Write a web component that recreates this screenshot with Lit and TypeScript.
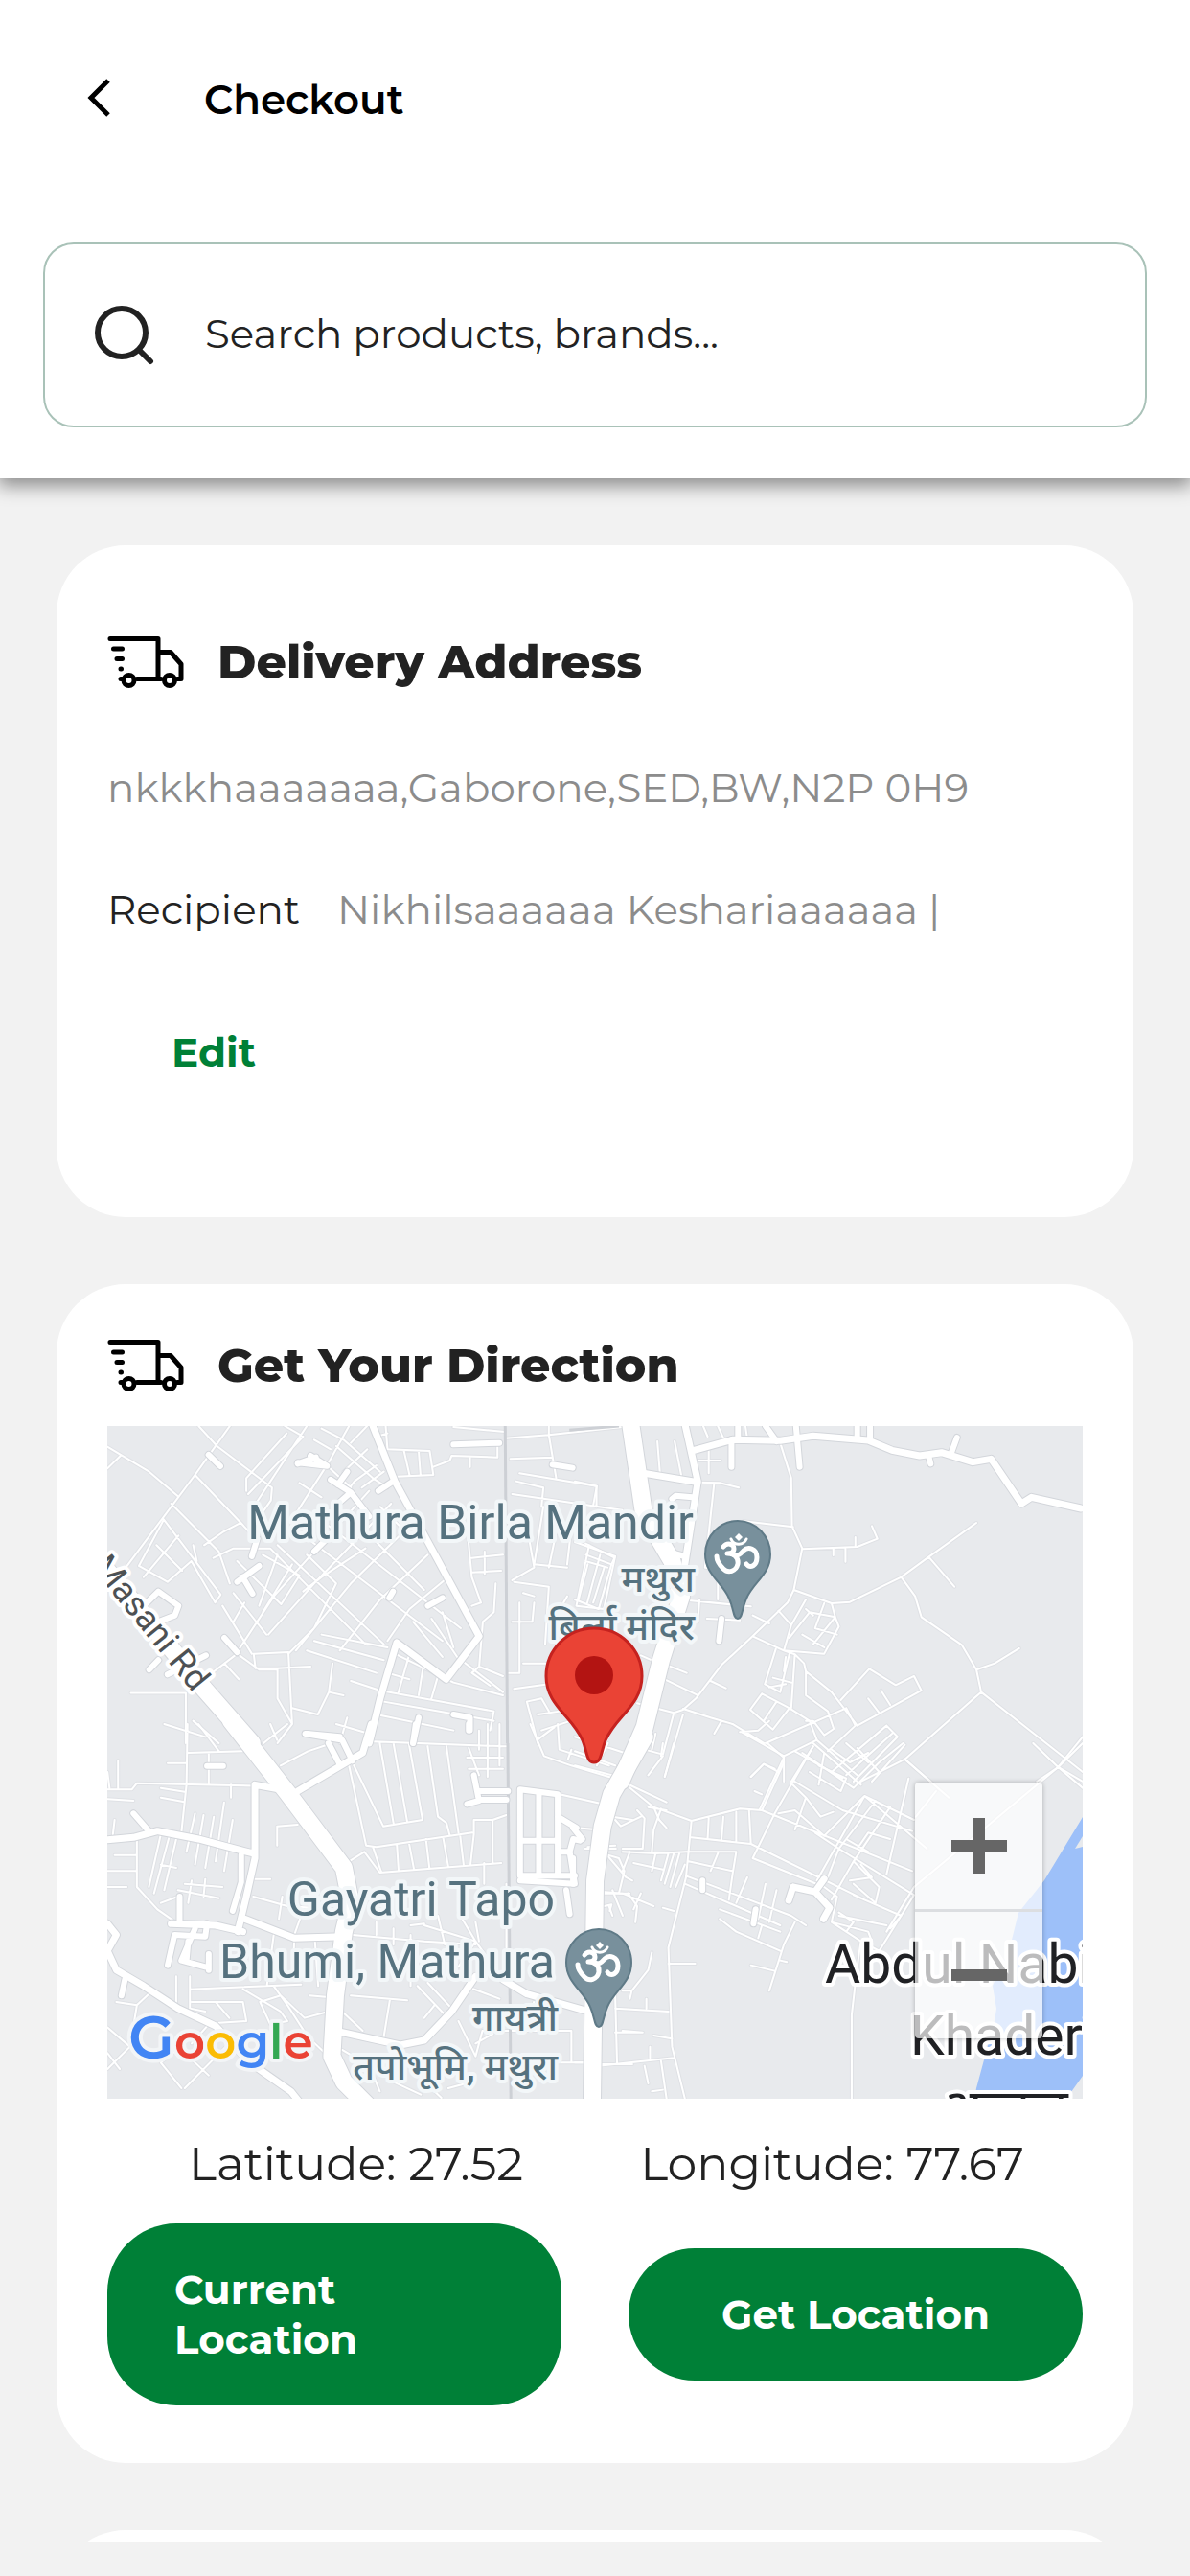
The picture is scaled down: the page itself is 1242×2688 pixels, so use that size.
import { LitElement, html, svg, css } from "lit";
import { customElement } from "lit/decorators.js";

/* Street geometry. Every tile has its own coordinate space, placed on the map by a matrix. */
interface Tile {
  matrix: string;
  minor: string;
  medium: string;
  artery: string;
  major: string;
  border: string;
}

const TILES: Tile[] = [
  {
    matrix: "matrix(.3827 0 0 .3333 -52 -149)",
    border: "M1221 447L1227 1440",
    major: "M136 900L400 1270L530 1440",
    artery: "M860 447L920 620L1020 830L1150 1105L1060 1240L925 1125L880 1300L850 1440",
    medium:
      "M412 537L444 573M1080 505L1205 500M1350 568L1405 578M656 562L735 572L690 540M655 565L705 545M745 615L800 655L850 730M790 590L765 630M765 690L800 655M875 650L915 620M545 800L530 855M490 935L550 885M505 920L532 972M700 840L735 800M905 985L915 965M1010 1010L1050 985M235 1010L275 965L330 1010L320 1040L275 1060M455 1110L490 1155M300 1225L405 1165M250 1210L275 1180M1080 1350L1125 1360V1400M985 1360L970 1440M680 1410L770 1420",
    minor:
      "M136 512L250 590L327 665M136 580L172 540M470 447L375 600L180 900M385 447L435 510L585 640L582 680L545 740M375 600L500 750L540 800M620 447L670 480L520 660M625 470L515 610V650M680 447L535 700M720 455L780 490L880 590M795 447L740 560L640 740M760 510L860 610L900 640M800 500L850 440M700 490L745 520M660 625L720 670M715 550L800 640M845 520L780 590M870 570L810 620L730 740M890 590L830 640M895 447L900 520L1015 525L1025 600L925 605M945 525L960 600M985 525L990 600M1025 575L1070 555L1075 540L1200 545V505M1125 545V575M870 480L900 470M1080 450L1220 465M1222 485L1340 475L1540 450M1340 447V475L1360 610M1235 550L1350 545M1260 595L1470 635V700M1250 620L1325 640L1320 700M1240 660L1540 710M310 690L440 840L470 940M290 740L445 975L430 1000L365 870L300 935L222 885L290 740M330 790L235 920M270 820L340 900M370 820L380 870M425 860L480 830L580 830L840 1130M400 820L450 780L500 750M560 850L660 915L610 1005L490 870M600 850L550 1010M640 880L560 1030M680 850L760 940L700 1080L630 1160M850 650L590 980L490 1155M910 690L700 940L575 1100M960 760L800 940L650 1150M1010 850L880 990L770 1150M1055 930L960 1020L900 1120M600 820L890 1130M660 780L1050 1120M740 760L1100 1080M800 730L1000 960M880 700L960 790M480 970L570 1100M510 1000L480 1060M450 1010L530 1160M670 965L720 920L840 830M720 1100L900 1140M700 1120L890 1180M680 1150L870 1220M630 1160L640 1380L600 1440M535 1160L630 1155M535 1160L540 1205L600 1205V1300L640 1380M600 1205L690 1200M410 1230L490 1160L550 1210H600M455 1190L495 1240M200 1283H350V1440M370 1370L440 1440M750 1190L740 1280L710 1350L640 1330M740 1280L780 1290M800 1245L880 1275L1190 1340L1180 1400M920 1160L1080 1250L1215 1290M900 1220L960 1240M1000 1180L985 1290M960 1160L930 1280M1040 1220L1020 1300M890 1310L1190 1370M870 1350L1080 1400M760 1380L850 1410M790 1360L770 1440M1020 1050L1090 1170L1215 1280M1050 1030L1080 1140M970 1060L1050 1170M1120 800L1130 920L1155 1000L1130 1010M1130 860L1215 850M1130 905L1210 900M1165 840V910M1195 940L1190 1030L1160 1060L1150 1200L1215 1230M1150 1200L1130 1220L1180 1260M1280 760L1300 890L1240 930M1325 700L1300 880L1390 890M1360 780L1340 890M1400 780L1390 880M1245 935L1340 950L1330 1130M1270 970L1300 980M1260 1000V1220H1230M1300 1000L1295 1060L1240 1060M1450 820L1415 1010L1490 1020L1520 860L1440 815M1480 850L1445 1000M1440 870L1500 890M1390 980L1370 1020M1270 1190H1330M1245 1270L1340 1255M1280 1310L1320 1300L1340 1340M1280 1310L1310 1440M1310 1350L1370 1340M1320 1400L1400 1370",
  },
  {
    matrix: "matrix(.3827 0 0 .3333 488 -9)",
    border: "M-15 40L90 30L120 27",
    major: "M152 20L188 300L265 450L290 560L235 760L190 970L125 1140",
    artery:
      "M325 103L430 70L560 73L650 58L800 72L865 103L940 120L1000 110L1085 140L1135 130L1218 270L1245 250L1380 285M300 20L335 200L300 460M190 175L335 203",
    medium:
      "M427 70V155M603 27L613 155M520 27L550 75M1042 63L1027 110M965 122L970 145M265 255L275 245L320 250M400 630L393 700M250 420L300 435M805 27V70M770 27V60M445 27V60",
    minor:
      "M350 27L362 60M390 27L405 65M465 27L470 65M225 75L232 175M272 75L290 180M330 135H397M365 100V175M335 203L395 205L447 220M380 205L355 470M560 80L590 190L592 340L620 410L597 540L580 580L480 690L400 775L330 880L295 915M460 325L595 343M620 412L770 405L825 380L810 340M765 375V402M705 410V432M738 412V452M1095 330L965 437L890 500L750 578L700 582L597 540M965 437L1035 530M890 500L928 560L945 625L1055 712L1095 790L1108 860L1385 1110M1095 790L1145 770L1212 723M1108 860L900 1070L780 1140M900 1070L970 1140M1318 1095L1385 1000M1318 1095L1260 1140M1318 1095L1385 1140M555 605L590 650L630 570M590 650L570 730L680 740L720 655L710 625L640 610L585 690M700 582L710 625L650 710M680 582L655 660L715 680M630 600L650 620M620 680L680 720M485 620L530 645M485 685L570 730L600 742L625 770L630 795L700 860L770 965L945 855L925 810L875 838L803 787L725 885M548 725L518 835L560 860L585 740M600 742L590 910M540 815L590 830M530 845L575 835M575 750L570 795M630 795V870L690 920L706 975L680 995L650 950L630 950M510 865L478 915L540 977L585 910L510 865M550 890L515 950M585 910L640 950L660 1010L770 1120M520 1020L740 910M515 1020L430 960L370 940L295 912M740 910L765 965L690 1045M800 880L830 925M835 855L860 900M380 990L400 950M455 985L570 1060V1140M480 1125L515 1085L555 1110M450 985L500 980L530 950M850 965L700 1110M850 965L880 1000L760 1140M865 990L740 1120M900 1025L810 1140M770 1035L830 1110M660 1010L570 1060M650 1030L590 1140M600 1045L730 1130M250 775L305 800M245 820L335 870M370 825L412 848M180 745L210 760M170 895L270 925L295 915M270 925L240 1055L190 1040M295 930L245 1125M220 990L210 1040M0 1045L110 1090M0 1090L135 1130M0 1000L135 1050M90 1020L60 1090M0 200L60 215L50 275M30 430L100 460L65 600L0 570M35 460L10 570M80 470L50 580M0 390L110 435L100 460M285 570L480 592M340 570L335 640M360 630L450 635M355 470L390 480V570",
  },
  {
    matrix: "matrix(.3571 0 0 .3333 -12 311)",
    border: "M1204 60L1213 1175",
    major: "M395 -10L560 215L725 450L745 560L725 650L700 850L690 1040L725 1120L790 1190",
    artery:
      "M805 0L780 90L590 210M530 203L465 190V420L440 540L415 650M34 362L110 355L180 335L300 360L460 405M34 625L60 660L34 710L60 770L140 820L240 890L350 945L450 1060L570 1150L600 1190M435 610L580 670L720 665M220 625L350 630L430 650M720 965L890 1005L960 990L1040 900L1110 790M1190 800L1260 845L1425 895",
    medium:
      "M612 30L720 50L750 115M680 60L715 130M935 0L927 60M325 131H372M110 280L155 335M425 410V495L400 585M75 850L85 800M245 540V625M210 755L230 660L320 665L325 625M290 640L250 740L320 760M270 680L265 740M330 720V770M1105 160L1120 240L1085 250M1120 210H1205M1120 237H1200M1240 205V475H1400M1350 220L1240 205M1295 215V475M1240 365H1350M1350 225V470M1350 290L1405 325M1350 400H1385L1395 360L1415 365M1385 400L1400 500L1240 490M1375 520L1385 595M1090 0V20",
    minor:
      "M268 0L265 190L250 340L280 360M34 205H105L120 185L520 195M34 235L110 240M65 115V200M34 150L40 200M210 122H265M270 90L430 85M330 90V185M300 0L360 85M200 0L320 40M490 60L560 0M510 0L530 50M540 130L620 85L690 60M395 190V230M190 200L260 212M190 230L255 243M290 280L265 400M315 285L290 440M345 290L320 450M375 245L350 430M400 300L375 460M190 345L155 510M215 350L170 530M235 360L200 520M190 440L235 450M120 360V510L180 580L240 625M55 410H120M34 460H120M34 510H90M55 300L50 345M280 490L270 560M320 485L315 540M240 520L360 545M260 500L370 510M240 540L190 560M465 485H510M530 320L590 315M530 320V380M740 130L790 380L820 385L1100 340M740 430L785 400L830 465L1185 435M750 120L840 320L955 300L915 60M830 60L870 310M870 60L910 305M810 55L1200 70M970 70L1000 290L1025 310L1035 350M1025 70L1060 340M810 385L835 465M880 380L885 460M915 370L930 455M965 360L975 450M1015 355L1030 445M1065 350L1075 440M1105 345V300L1160 300V435M1160 300L1200 285M1135 435V500M1095 440L1105 345M1090 75L1120 160M1085 105H1190M1090 140H1190M1120 20V80M1145 0V165M1180 0V130M1270 0L1310 100L1390 130L1530 175M1350 0L1355 80L1500 130M1390 80L1380 110M1290 50L1340 10M1355 220L1480 250M1405 325L1460 330M1430 390H1520M1510 290L1568 300M1510 520L1540 600M1470 380L1550 480L1568 490M1475 530H1560M1510 600L1500 570M275 790V890L320 900M275 830L600 815M280 870H430L440 930L360 935M350 870L390 920M60 870L120 880L100 1010L34 1080M34 950L100 1010M120 880L160 840M235 790V880M34 1030L70 1080M430 830L540 900L560 930M480 870L510 940L560 930M480 870L540 850L610 920L680 900M520 820L560 880L620 980L670 1030M260 1140L380 1010M190 1060L260 1000M190 1060L250 1140M240 1010L330 1100M625 850L680 855M745 850L910 865M860 860L840 990M720 900L780 960M920 660V820M960 630L1050 660L1110 680L1190 800M750 660L960 680L1110 690M820 620V660M870 640V690M920 630L960 625M1000 600L1020 690M1060 590L1110 680L1060 760M1110 620L1120 680M940 820L1020 910M970 810L1040 890M960 920L990 880M1080 820L1180 860M1060 930L1110 1040L1130 960M1130 960H1390V1060M1110 1000L1160 970M1350 1060H1425M1280 870V950M1480 1065H1568M1200 500V700M280 1000L330 940M600 600L580 660M545 540L535 610M460 540L560 570L700 580M470 680L480 800M520 660L500 820M580 680L575 790M640 670L650 820M720 1020L800 1070L830 1150M870 1120L950 1160M960 1120L1010 1170M1030 1140L1100 1120",
  },
  {
    matrix: "matrix(.3827 0 0 .3333 488 331)",
    border: "",
    major: "M190 -20L100 160L75 260L55 430L47 1120",
    artery: "M595 450L655 465L680 425M655 465L695 515L678 550M595 450L583 492",
    medium: "M348 430V460M493 520L487 565M-5 265L20 300M-5 360L-5 440",
    minor:
      "M130 120L250 185M145 135L215 200L318 243L303 420L255 640L265 950L300 1113M318 243L450 205L510 210L920 400M200 200L250 210M170 210L190 235L185 330L130 330M215 200L230 240L250 265M110 240L125 260L180 230M235 205L215 270L210 340M318 295L480 315L790 490M510 210L570 60M525 0L570 45L505 205M650 10L545 220L485 360L680 450L715 480M600 120L730 210L920 275M620 30L760 140L830 60L895 0M590 125L630 170L600 270M630 170L670 230L705 215M555 220L600 210L680 290L790 165L925 240M680 30L665 130M665 70L740 110L725 150L640 90M650 0L780 130M700 20L750 60L800 30M740 0L800 60M790 165L660 430M820 180L720 330L690 420M860 200L760 370L700 490M910 110L850 410M860 300L800 280L770 330M740 300L800 340M655 280L720 330L925 475L830 650M790 165L960 330M900 50L1020 170M1250 0L1318 75L1385 140M1318 75L925 450L850 590M1385 0L1318 75M985 150L930 230M760 370L830 450L820 500L760 440M750 430L810 420L780 380M760 475L890 540L860 580M720 540L850 570M715 480L700 560L780 620L830 650M700 560L800 590L810 620M720 530L760 560L740 590M780 620L770 700L755 850V1113M365 235L362 300M405 230L400 300M440 215L440 305M475 210L480 315M305 340H440L430 410M390 345L370 400M310 370L430 400M303 415L590 540L630 570M300 440L560 570M430 410L420 490M470 420L440 500M520 440L500 550M550 460L530 560M395 520L560 590M395 550L440 590L560 650M600 560L570 630L530 775M510 570L500 610M480 695L545 713M560 680L578 685M90 350L120 360L135 400L120 470M130 340L220 345L303 340M150 340L130 400M220 345L210 400M160 375L240 395M255 345L235 430M270 345L245 440M285 345L260 450M300 380L275 450M75 465L130 470L215 510M145 470L170 510L165 560M180 470L160 520M240 515L270 525M80 510L100 505L95 525M255 690H328M210 655L200 710L155 775H130M155 775L150 800M110 790L115 1000M110 830L255 840M195 800V830M110 905L185 905M215 915L265 925M65 1010L270 985M205 950V985M190 1010L200 1065M235 995L250 1113M210 1090L240 1085M200 100L240 40M240 0L235 40M245 105L270 0M480 105L515 65L545 80M490 150L510 160M35 325L110 320M0 825L30 830M0 1000H30M130 900L185 905",
  },
];

@customElement("truck-icon")
export class TruckIcon extends LitElement {
  static styles = css`
    :host { display: block; width: 80px; flex: none; }
    .truck { display: block; width: 100%; }
  `;
  render() {
    return html`<svg class="truck" viewBox="0 0 80 56" fill="none" stroke="#000" stroke-width="5" stroke-linecap="round" stroke-linejoin="round" aria-hidden="true">
      <path d="M3 3.500H53V45.500M54 17.500H66L77 30V45.500H73M56 45.500H31M6.500 14H15.500M10 24.500H15.500M14 35h.5M14 45.500H17" />
      <circle cx="22.500" cy="47" r="5.500" /><circle cx="65" cy="47" r="5.500" />
    </svg>`;
  }
}

@customElement("street-map")
export class StreetMap extends LitElement {
  static styles = css`
    :host { display: block; position: relative; overflow: hidden; background: #e8eaed; }
    .canvas { display: block; width: 100%; height: auto; }
    .road { fill: none; stroke-linecap: round; stroke-linejoin: round; vector-effect: non-scaling-stroke; }
    .case { stroke: #d3d6db; }
    .fill { stroke: #fff; }
    .border { fill: none; stroke: #cdd0d5; stroke-width: 3px; vector-effect: non-scaling-stroke; }
    .w-minor.case { stroke-width: 4px; stroke: #dfe1e5; }
    .w-minor.fill { stroke-width: 2px; }
    .w-medium.case { stroke-width: 8px; }
    .w-medium.fill { stroke-width: 6px; }
    .w-artery.case { stroke-width: 9px; }
    .w-artery.fill { stroke-width: 7px; }
    .w-major.case { stroke-width: 20px; }
    .w-major.fill { stroke-width: 18px; }
    .label {
      font-family: Roboto, "Noto Sans", sans-serif;
      fill: #56727f; stroke: #f3f7f9; stroke-width: 8px; stroke-linejoin: round; paint-order: stroke;
    }
    .place { font-size: 50px; }
    .native { font-size: 39px; font-weight: 500; }
    .town { font-size: 57px; fill: #202124; stroke: #fff; }
    .street { font-size: 36px; fill: #4d5154; stroke: #fff; }
    .google { font-family: Montserrat, sans-serif; font-size: 50px; font-weight: 600; stroke: #f3f5f7; stroke-width: 8px; stroke-linejoin: round; paint-order: stroke; }
    .initial { font-size: 62px; }
    .zoom {
      position: absolute; right: 42px; bottom: 63px; width: 133px;
      display: flex; flex-direction: column; border-radius: 4px;
      background: rgba(255, 255, 255, 0.7); box-shadow: 0 0 5px rgba(0, 0, 0, 0.25);
    }
    .step { height: 132px; border: 0; padding: 0; background: none; display: grid; place-items: center; }
    .step + .step { height: 135px; border-top: 3px solid #dcdee1; }
    .sign { display: block; width: 58px; height: 58px; }
  `;

  private roads() {
    const kinds = ["minor", "medium", "artery", "major"] as const;
    const layer = (kind: (typeof kinds)[number], part: string) =>
      TILES.map((t) => svg`<g transform=${t.matrix}><path class="road w-${kind} ${part}" d=${t[kind]} /></g>`);
    return svg`
      ${layer("minor", "case")}${layer("minor", "fill")}
      ${TILES.map((t) => svg`<g transform=${t.matrix}><path class="border" d=${t.border} /></g>`)}
      ${kinds.slice(1).map((k) => layer(k, "case"))}
      ${kinds.slice(1).map((k) => layer(k, "fill"))}`;
  }

  private temple(x: number, y: number) {
    return svg`<g transform="translate(${x} ${y})">
      <path d="M0 67C-5 67 -4 57 -9 46C-16 29 -34 21 -34 0A34 35 0 0 1 34 0C34 21 16 29 9 46C4 57 5 67 0 67Z" fill="#78909c" stroke="#5f7a87" stroke-width="2" />
      <g fill="none" stroke="#fff" stroke-width="5" stroke-linecap="round" stroke-linejoin="round">
        <path d="M-15 -8C-11 -13 -4 -11 -4 -6C-4 -2 -8 -1 -11 -1C-4 -1 1 3 0 10C-2 18 -10 20 -15 15C-19 11 -22 6 -22 2" />
        <path d="M-5 0C2 2 3 -1 6 -4C11 -9 20 -6 20 3C20 12 13 15 9 10" />
        <path d="M-7 -16C-4 -9 6 -9 9 -16" stroke-width="3" />
      </g>
      <path d="M1 -22L5 -18L1 -14L-3 -18Z" fill="#fff" />
    </g>`;
  }

  render() {
    return html`
      <svg class="canvas" viewBox="0 0 1018 702" role="img" aria-label="Map">
        <path d="M1018 408L978 474L951 508L942 544L924 584L928 608L926 621L907 691L905 702H1001L1018 678Z" fill="#9dc0f9" />
        <path d="M1018 428L1010 441L1018 439Z" fill="#e8eaed" />
        ${this.roads()}
        <text class="label street" transform="translate(-17 147) rotate(51)">Masani Rd</text>
        <text class="label place" text-anchor="end" x="612" y="118">Mathura Birla Mandir</text>
        <text class="label native" text-anchor="end" x="613" y="173">मथुरा</text>
        <text class="label native" text-anchor="end" x="613" y="223">बिर्ला मंदिर</text>
        <text class="label place" text-anchor="end" x="467" y="511">Gayatri Tapo</text>
        <text class="label place" text-anchor="end" x="467" y="576">Bhumi, Mathura</text>
        <text class="label native" text-anchor="end" x="470" y="631">गायत्री</text>
        <text class="label native" text-anchor="end" x="470" y="682">तपोभूमि, मथुरा</text>
        <text class="label town" x="749" y="581">Abdul Nabi</text>
        <text class="label town" x="838" y="656">Khaderi</text>
        <text class="label town" x="870" y="733">अब्दुल</text>
        ${this.temple(658, 134)} ${this.temple(513, 560)}
        <path d="M508 351C500 351 501 340 496 328C485 302 458 292 458 261A50 50 0 0 1 558 261C558 292 531 302 520 328C515 340 516 351 508 351Z" fill="#ea4335" stroke="#c5221f" stroke-width="3" />
        <circle cx="508" cy="260" r="20" fill="#b31412" />
        <text class="google" x="22" y="660"><tspan class="initial" fill="#4285f4">G</tspan><tspan fill="#ea4335">o</tspan><tspan fill="#fbbc04">o</tspan><tspan fill="#4285f4">g</tspan><tspan fill="#34a853">l</tspan><tspan fill="#ea4335">e</tspan></text>
      </svg>
      <div class="zoom">
        <button class="step" type="button" aria-label="Zoom in">
          <svg class="sign" viewBox="0 0 58 58"><path d="M29 0V58M0 29H58" stroke="#666" stroke-width="12" /></svg>
        </button>
        <button class="step" type="button" aria-label="Zoom out">
          <svg class="sign" viewBox="0 0 58 58"><path d="M0 29H58" stroke="#666" stroke-width="12" /></svg>
        </button>
      </div>`;
  }
}

@customElement("app-root")
export class AppRoot extends LitElement {
  static styles = css`
    :host {
      display: flex; flex-direction: column; height: 100vh; box-sizing: border-box;
      padding-bottom: 35px; background: #f2f2f2; color: #222;
      font: 400 42px/52px Montserrat, Inter, sans-serif;
    }
    .top { position: relative; background: #fff; padding: 74px 45px 53px; box-shadow: 0 6px 18px 2px rgba(0, 0, 0, 0.42); }
    .bar { display: flex; align-items: center; gap: 88px; padding-left: 38px; }
    .back { display: block; border: 0; background: none; padding: 6px 8px 10px; height: 60px; box-sizing: border-box; }
    .chevron { display: block; width: 26px; height: 44px; }
    .title { margin: 0; font-size: 42px; line-height: 60px; font-weight: 600; color: #000; }
    .search { display: flex; align-items: center; gap: 53px; margin-top: 119px; padding: 0 52px; height: 193px; box-sizing: border-box; border: 2px solid #a9c2b8; border-radius: 32px; }
    .glass { display: block; width: 62px; height: 62px; flex: none; }
    .query { flex: 1; min-width: 0; border: 0; outline: 0; padding: 0 0 4px; background: none; font: inherit; color: #222; }
    .query::placeholder { color: #222; opacity: 1; }
    .scroll { flex: 1; min-height: 0; overflow-y: auto; scrollbar-width: none; display: flex; flex-direction: column; gap: 70px; padding: 70px 59px 0; }
    .card { flex: none; display: flex; flex-direction: column; background: #fff; border-radius: 72px; padding: 55px 53px 60px; }
    .address { gap: 75px; padding: 92px 53px 124px; }
    .head { display: flex; align-items: center; gap: 35px; }
    .name { margin: 0; font-size: 49px; line-height: 60px; font-weight: 800; }
    .muted { color: #8c8c8c; margin: 0; }
    .person { display: flex; gap: 39px; }
    .edit { align-self: flex-start; border: 0; background: none; padding: 22px 67px; font: inherit; font-weight: 700; color: #008037; }
    .map { margin-top: 33px; }
    .coords { display: flex; justify-content: space-around; margin-top: 38px; padding-left: 24px; font-size: 49px; line-height: 60px; }
    .actions { display: grid; grid-template-columns: 1fr 1fr; gap: 70px; align-items: center; margin-top: 32px; }
    .go { display: flex; justify-content: center; border: 0; border-radius: 72px; background: #008037; color: #fff; padding: 43px 70px; font: inherit; font-weight: 700; text-align: left; }
    .next { height: 400px; box-sizing: border-box; }
  `;

  render() {
    return html`
      <header class="top">
        <div class="bar">
          <button class="back" type="button" aria-label="Back">
            <svg class="chevron" viewBox="0 0 26 44"><path d="M22 4L4 22L22 40" fill="none" stroke="#000" stroke-width="5" /></svg>
          </button>
          <h1 class="title">Checkout</h1>
        </div>
        <label class="search">
          <svg class="glass" viewBox="0 0 62 62" fill="none" stroke="#222" stroke-width="6" stroke-linecap="round" aria-hidden="true"><circle cx="28" cy="28" r="25" /><path d="M46 46L58 58" /></svg>
          <input class="query" type="text" placeholder="Search products, brands..." aria-label="Search products, brands" />
        </label>
      </header>
      <main class="scroll">
        <section class="card address">
          <div class="head"><truck-icon></truck-icon><h2 class="name">Delivery Address</h2></div>
          <p class="muted">nkkkhaaaaaaa,Gaborone,SED,BW,N2P 0H9</p>
          <div class="person"><span>Recipient</span><span class="muted">Nikhilsaaaaaa Keshariaaaaaa |</span></div>
          <button class="edit" type="button">Edit</button>
        </section>
        <section class="card">
          <div class="head"><truck-icon></truck-icon><h2 class="name">Get Your Direction</h2></div>
          <street-map class="map"></street-map>
          <div class="coords"><span>Latitude: 27.52</span><span>Longitude: 77.67</span></div>
          <div class="actions">
            <button class="go" type="button">Current Location</button>
            <button class="go" type="button">Get Location</button>
          </div>
        </section>
        <section class="card next"></section>
      </main>`;
  }
}
